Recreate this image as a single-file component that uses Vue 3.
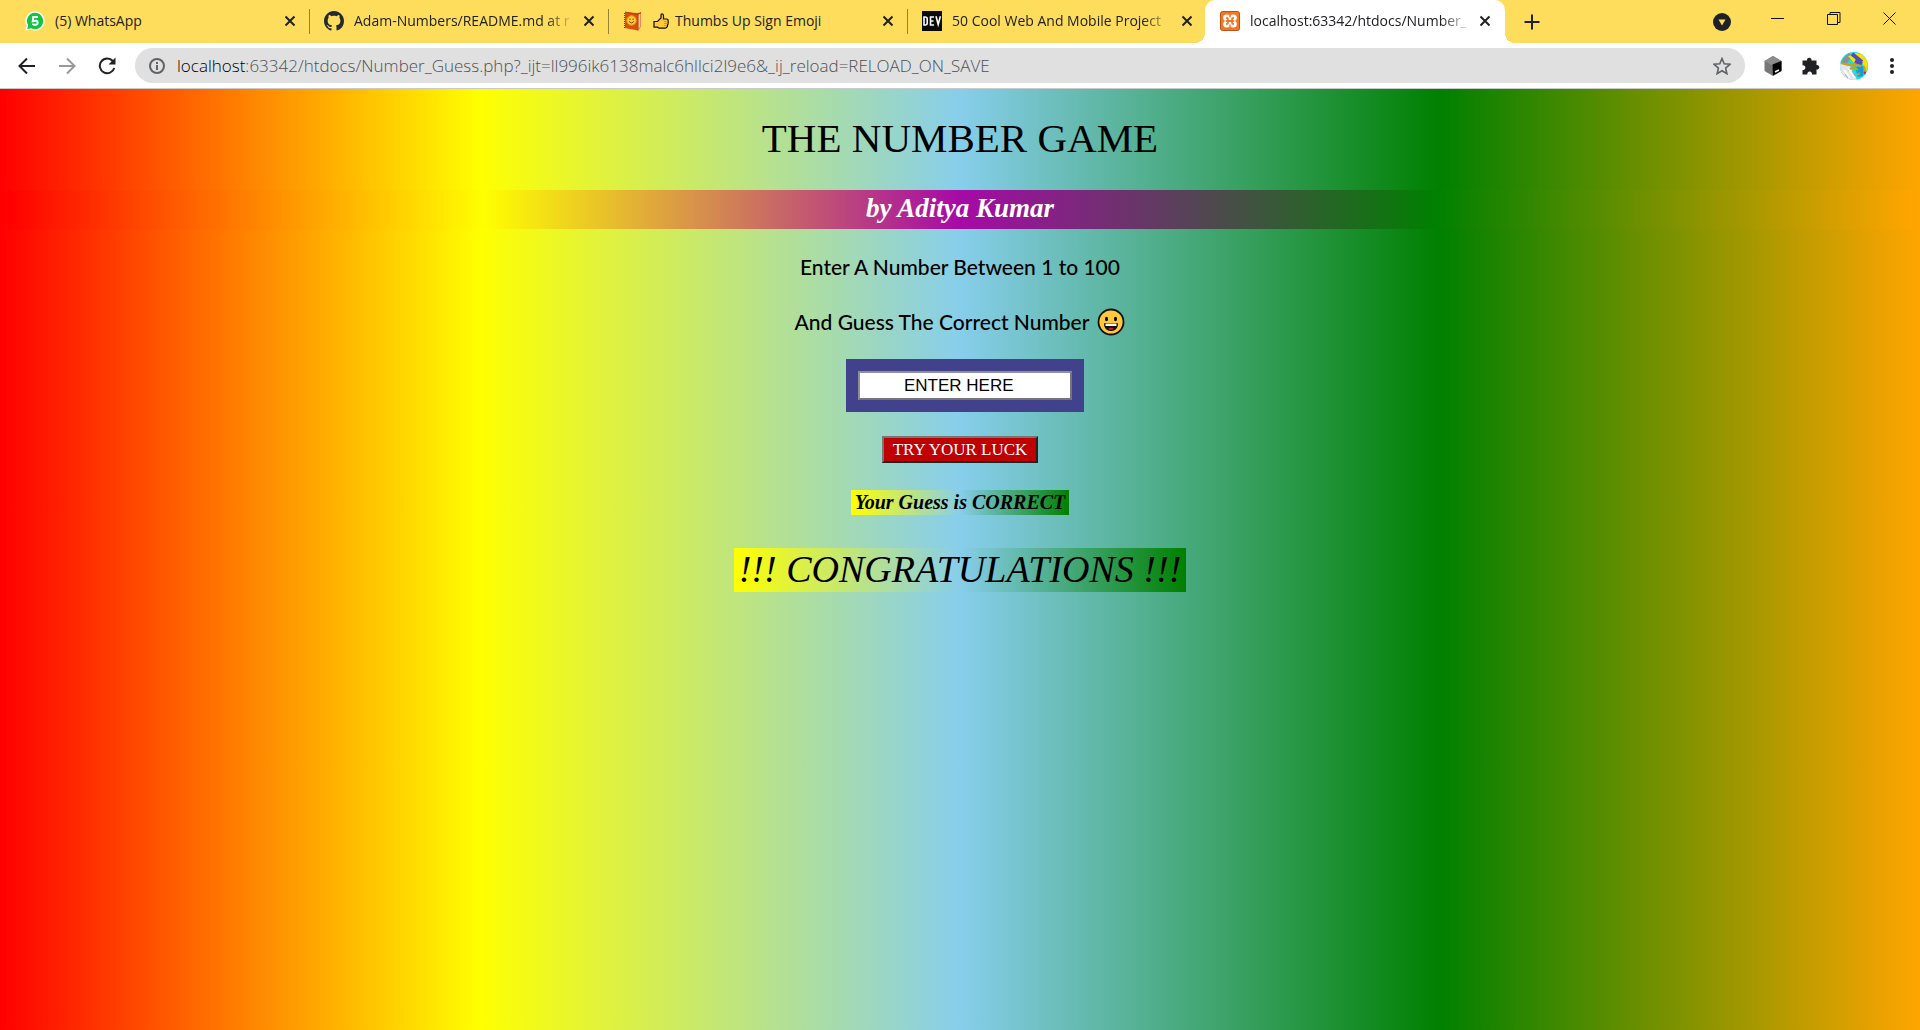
<script setup>
import { ref } from 'vue'

const tabs = [
  { icon: 'whatsapp', title: '(5) WhatsApp' },
  { icon: 'github', title: 'Adam-Numbers/README.md at r', fade: true },
  { icon: 'emoji', title: 'Thumbs Up Sign Emoji', thumb: true },
  { icon: 'dev', title: '50 Cool Web And Mobile Project', fade: true },
  { icon: 'xampp', title: 'localhost:63342/htdocs/Number_', fade: true, active: true },
]
const guess = ref('ENTER HERE')
</script>

<template>
  <div class="browser">
    <header>
      <nav class="tabstrip" aria-label="Tabs">
        <div v-for="t in tabs" :key="t.icon" class="tab" :class="[t.icon, { active: t.active }]">
          <svg v-if="t.icon === 'whatsapp'" class="fav" viewBox="0 0 20 20">
            <path d="M10 .4a9.6 9.6 0 1 1-4.300 18.200L.3 19.800l1.300-5A9.600 9.600 0 0 1 10 .4z" fill="#fff" />
            <path d="M10 1.800a8.200 8.200 0 1 1-3.800 15.500L2.200 18l1-3.700A8.200 8.200 0 0 1 10 1.800z" fill="#10c445" />
            <path d="M13 6H8.200L7.800 10.200c3-1 4.900-.5 4.900 1.500 0 2.200-3 2.600-5.300 1.300" fill="none" stroke="#fff" stroke-width="2" />
          </svg>
          <svg v-else-if="t.icon === 'github'" class="fav" viewBox="0 0 16 16">
            <path fill="#24292f" d="M8 0C3.580 0 0 3.580 0 8c0 3.540 2.290 6.530 5.470 7.590.4.070.55-.17.55-.38 0-.19-.01-.82-.01-1.490-2.010.37-2.530-.49-2.690-.94-.09-.23-.48-.94-.82-1.130-.28-.15-.68-.52-.01-.53.63-.01 1.080.58 1.230.82.72 1.210 1.870.87 2.330.66.07-.52.28-.87.51-1.070-1.780-.2-3.640-.89-3.640-3.950 0-.87.31-1.590.82-2.150-.08-.2-.36-1.020.08-2.120 0 0 .67-.21 2.200.82.64-.18 1.320-.27 2-.27s1.360.09 2 .27c1.530-1.040 2.200-.82 2.200-.82.44 1.100.16 1.920.08 2.120.51.56.82 1.270.82 2.150 0 3.070-1.870 3.750-3.650 3.950.29.25.54.73.54 1.480 0 1.070-.01 1.930-.01 2.200 0 .21.15.46.55.38A8.010 8.010 0 0 0 16 8c0-4.420-3.580-8-8-8z" />
          </svg>
          <svg v-else-if="t.icon === 'emoji'" class="fav" viewBox="0 0 20 20">
            <path d="M2 1l11.500 1 4.500-.5v14L15 19.500 2 17z" fill="#d9500b" />
            <path d="M15 3.500l2.500-1v13L15 18.500z" fill="#f0c9a0" />
            <path d="M2 1l13 2.500 3-2M15 19.500v-16" stroke="#b5420c" fill="none" />
            <path d="M1.500 2v15" stroke="#8a3510" stroke-dasharray="1 1" />
            <circle cx="8.500" cy="9.500" r="4.700" fill="#ffd12e" stroke="#f0961a" />
            <path d="M7 7.500v1.500M10 7.500v1.500M6 10.500q2.500 3 5 0" stroke="#8a4208" fill="none" />
          </svg>
          <svg v-else-if="t.icon === 'dev'" class="fav" viewBox="0 0 20 20">
            <rect width="20" height="20" fill="#0a0a0a" />
            <path d="M2 6v8h1.200Q5.200 14 5.200 12V8Q5.200 6 3.200 6zM12 6H8.500v8H12M8.500 10H11.500M14 5.200l2.200 8.300 2.200-8.300" fill="none" stroke="#fff" stroke-width="1.600" />
          </svg>
          <svg v-else class="fav" viewBox="0 0 20 20">
            <rect x=".5" y=".5" width="19" height="19" rx="2" fill="#f37623" stroke="#b9541a" />
            <g fill="none" stroke-linecap="round" stroke-linejoin="round">
              <path d="M6.500 6.800Q8 6.800 8 8.500v3q0 1.700-1.500 1.700M13.500 6.800Q12 6.800 12 8.500v3q0 1.700 1.500 1.700M8 10h4" stroke="#fff" stroke-width="6.600" />
              <path d="M6.800 7Q8 7 8 8.500q0 1.500-1.500 1.500M6.800 13Q8 13 8 11.500M13.200 7Q12 7 12 8.500q0 1.500 1.500 1.500M13.200 13Q12 13 12 11.500M8 10h4" stroke="#f37623" stroke-width="1.800" />
              <path d="M10 3v3M10 14v3" stroke="#f37623" stroke-width="1.400" />
            </g>
          </svg>
          <svg v-if="t.thumb" class="thumb" viewBox="0 0 16 16">
            <path d="M1 8.500h3.500L8 5V2q0-1.200 1-1.200 1.500 0 1.500 2V6H14q1.500.5 1 2 .5 1 0 2 .3 1.200-.5 2 .2 1.500-1 2.500-.5.700-1.500.7H6l-1.500-1H1z" fill="#ffc83d" stroke="#111" stroke-width="1.200" />
            <path d="M11 8.500h4M11 10.500h4M11 12.500h3" stroke="#c88a18" stroke-width=".7" />
          </svg>
          <span class="title" :class="{ fade: t.fade }">{{ t.title }}</span>
          <button class="close" aria-label="Close tab">
            <svg viewBox="0 0 12 12"><path d="M1.500 1.500l9 9M10.500 1.500l-9 9" /></svg>
          </button>
        </div>
        <button class="plus" aria-label="New tab">
          <svg viewBox="0 0 16 16"><path d="M8 .5v15M.5 8h15" /></svg>
        </button>
        <div class="window">
          <button aria-label="Search tabs">
            <svg width="18" height="18" viewBox="0 0 18 18"><circle cx="9" cy="9" r="9" fill="#202124" /><path d="M5.500 6.500h7L9 12.500z" fill="#ffdd5c" /></svg>
          </button>
          <button aria-label="Minimize"><svg class="line" width="14" height="14"><path d="M0 6.500h13" /></svg></button>
          <button aria-label="Restore"><svg class="line" width="14" height="14"><path d="M.5 2.500h10v10H.5zM3 2V.5h10v10H11" /></svg></button>
          <button aria-label="Close"><svg class="line" width="14" height="14"><path d="M.5.5l12 12M12.500.5l-12 12" /></svg></button>
        </div>
      </nav>
      <div class="toolbar">
        <button class="tool" aria-label="Back"><svg viewBox="0 0 18 18"><path d="M17 9H2M9 1.500L1.500 9 9 16.500" /></svg></button>
        <button class="tool off" aria-label="Forward"><svg viewBox="0 0 18 18"><path d="M1 9h15M9 1.500L16.500 9 9 16.500" /></svg></button>
        <button class="tool" aria-label="Reload"><svg viewBox="0 0 18 18"><path d="M14.800 4A7.400 7.400 0 1 0 16.300 11" /><path d="M17.500.5v7h-7z" class="solid" /></svg></button>
        <div class="address">
          <svg width="16" height="16" viewBox="0 0 16 16" fill="none" stroke="#5f6368" stroke-width="2"><circle cx="8" cy="8" r="7" /><path d="M8 7v5M8 4v2" /></svg>
          <span class="url"><b>localhost</b>:63342/htdocs/Number_Guess.php?_ijt=ll996ik6138malc6hllci2l9e6&amp;_ij_reload=RELOAD_ON_SAVE</span>
          <svg width="18" height="18" viewBox="0 0 18 18" fill="none" stroke="#5f6368" stroke-width="1.600"><path d="M9 1.500l2.200 5.300 5.800.5-4.400 3.800 1.300 5.600L9 13.700l-4.900 3 1.300-5.600L1 7.300l5.800-.5z" /></svg>
        </div>
        <div class="extensions">
          <svg width="18" height="20" viewBox="0 0 18 20"><path d="M9 0l8.500 5v10L9 20 .5 15V5z" fill="#777" /><path d="M9 0l8.500 5L9 10 .5 5z" fill="#8c8c8c" /><path d="M8.500 8.500l9-3.500v10L9 19.500z" fill="#000" /><path d="M11 16l4-2" stroke="#fff" stroke-width="1.500" /></svg>
          <svg width="20" height="18" viewBox="0 0 20 18"><path d="M2 3.500h4a2.300 2.300 0 1 1 4.500 0h5V8a2.300 2.300 0 1 1 0 4.500v5H11a2.400 2.400 0 1 0-4.700 0H1.500V13a2.400 2.400 0 1 0 0-4.700V3.500z" fill="#202124" /></svg>
          <svg width="28" height="28" viewBox="0 0 28 28">
            <defs><clipPath id="avatar"><circle cx="14" cy="14" r="14" /></clipPath></defs>
            <g clip-path="url(#avatar)">
              <rect width="28" height="28" fill="#18dfe5" />
              <path d="M0 11l10 3 7 14H3L0 22z" fill="#e4e4ec" />
              <path d="M3 7l6-6 3 4-5 6-6 1z" fill="#8d8e98" />
              <path d="M14 1l8 1 6 8-1 9-5-8z" fill="#f3e400" />
              <path d="M8 4l6 7 5-2-6-6z" fill="#f3e400" />
              <path d="M12 2l10 8M15 9l7 3" stroke="#554bbd" stroke-width="4" />
              <path d="M15 15l9-1-1 10-5 1z" fill="#169ad9" />
              <path d="M1 11l7 2 6-1 7 2M8 18l6-3 4 3M24 14l1 6M17 23l3-2" stroke="#c8a416" stroke-width="2" fill="none" />
              <path d="M4 18l6 8M8 16l7 10" stroke="#fff" stroke-width="2" />
              <path d="M5 22l3 4M12 19l3 5" stroke="#a5a6b4" />
              <path d="M24 20l2 2" stroke="#db1842" stroke-width="2" />
            </g>
          </svg>
          <svg class="dots" width="4" height="18" viewBox="0 0 4 18" fill="#202124"><circle cx="2" cy="3" r="2" /><circle cx="2" cy="9" r="2" /><circle cx="2" cy="15" r="2" /></svg>
        </div>
      </div>
    </header>
    <main>
      <h1>THE NUMBER GAME</h1>
      <h2>by Aditya Kumar</h2>
      <p><label for="guess">Enter A Number Between 1 to 100</label></p>
      <p class="second">And Guess The Correct Number
        <svg class="smile" viewBox="0 0 28 28">
          <circle cx="14" cy="14" r="12.500" fill="#ffc83d" stroke="#111" stroke-width="1.800" />
          <ellipse cx="9.500" cy="11" rx="1.500" ry="2.200" /><ellipse cx="18.500" cy="11" rx="1.500" ry="2.200" />
          <path d="M7.500 15.500h13q0 7-6.500 7t-6.500-7z" fill="#111" stroke="#111" />
          <path d="M8.500 15.500h11v2.500h-11z" fill="#fff" /><path d="M11 21q3-2.500 6 0-3 1.500-6 0z" fill="#e81224" />
        </svg>
      </p>
      <form @submit.prevent>
        <div class="frame"><input id="guess" v-model="guess" type="text" /></div>
        <button class="luck" type="submit">TRY YOUR LUCK</button>
      </form>
      <div class="result">Your Guess is CORRECT</div>
      <div class="result big">!!! CONGRATULATIONS !!!</div>
    </main>
  </div>
</template>

<style>
body { margin: 0; }
</style>

<style scoped>
* { box-sizing: border-box; }
.browser { display: flex; flex-direction: column; min-height: 100vh; font-family: "Open Sans", "Noto Sans", sans-serif; color: #000; }
button { font: inherit; border: 0; padding: 0; background: none; }
svg { display: block; flex: none; }
header { background: #fff; border-bottom: 1px solid #c8cacc; }
.tabstrip { display: flex; height: 43px; background: #ffdd5c; }
.tab { position: relative; display: flex; align-items: center; flex: 0 1 299px; min-width: 0; padding: 0 14px 2px; font-size: 14px; color: #202124; }
.tab.whatsapp { flex-basis: 310px; padding-left: 25px; }
.tab:not(.active):not(.dev)::after { content: ""; position: absolute; right: 0; top: 9px; height: 25px; width: 1px; background: #947f3b; }
.tab.dev { flex-basis: 297px; padding-right: 12px; }
.tab.active { flex-basis: 300px; padding-left: 15px; background: #fff; border-radius: 10px 10px 0 0; }
.tab.active::before, .tab.active::after { content: ""; position: absolute; bottom: 0; width: 10px; height: 10px; }
.tab.active::before { left: -10px; background: radial-gradient(circle at 0 0, transparent 10px, #fff 10px); }
.tab.active::after { right: -10px; background: radial-gradient(circle at 100% 0, transparent 10px, #fff 10px); }
.fav { width: 20px; height: 20px; margin-right: 10px; }
.thumb { width: 16px; height: 16px; margin-right: 6px; }
.title { flex: 1; min-width: 0; white-space: nowrap; }
.title.fade { -webkit-mask-image: linear-gradient(90deg, #000 calc(100% - 30px), transparent); mask-image: linear-gradient(90deg, #000 calc(100% - 30px), transparent); }
.close { margin-left: 8px; }
.close svg { width: 12px; height: 12px; stroke: #202124; stroke-width: 2; }
.plus { width: 54px; }
.plus svg { width: 16px; height: 16px; margin: 0 auto; stroke: #202124; stroke-width: 2; }
.window { display: flex; align-items: center; margin-left: auto; padding-right: 2px; }
.window button { display: flex; justify-content: center; width: 56px; }
.line { fill: none; stroke: #111; margin-bottom: 5px; }
.toolbar { display: flex; align-items: center; height: 45px; padding: 0 26px 0 18px; }
.tool { margin-right: 22px; }
.tool:nth-child(3) { margin-right: 19px; }
.tool svg { width: 18px; height: 18px; fill: none; stroke: #202124; stroke-width: 2; }
.tool.off svg { stroke: #999; }
.tool .solid { fill: #202124; stroke: none; }
.address { display: flex; align-items: center; flex: 1; height: 35px; min-width: 0; border-radius: 18px; background: #e0e0e0; padding: 0 14px; }
.url { flex: 1; min-width: 0; overflow: hidden; white-space: nowrap; margin-left: 12px; font-size: 17px; font-weight: 300; color: #4c5055; }
.url b { font-weight: 300; color: #000; }
.extensions { display: flex; align-items: center; gap: 19px; margin-left: 19px; }
.dots { margin-left: 3px; }
main { flex: 1; display: flex; flex-direction: column; align-items: center; padding: 0 8px; background: linear-gradient(90deg, red, yellow, skyblue, green, orange); }
h1 { margin: 24px 0 27px; font: 400 41px/50px "Liberation Serif", serif; }
h2 { align-self: stretch; margin: 0 0 24px; height: 39px; text-align: center; color: #fff; font: italic 700 27px/36px "Liberation Serif", serif; background: linear-gradient(90deg, red, yellow, #a60aa6, green, orange); }
p { margin: 0 0 27px; font: 500 21px/28px Lato, sans-serif; }
.second { display: flex; align-items: center; gap: 8px; margin-bottom: 23px; }
.smile { width: 28px; height: 28px; }
form { display: flex; flex-direction: column; align-items: center; }
.frame { padding: 12px; margin-left: 10px; background: #41418c; }
.frame input { display: block; width: 214px; height: 29px; padding: 0 0 0 44px; border: 2px solid; border-color: #8b9296 #767676 #767676 #8b9296; background: #fff; color: #000; font: 17px "Liberation Sans", sans-serif; }
.luck { width: 156px; height: 27px; margin: 24px 0 27px; border: 2px solid; border-color: #767676 #222 #222 #767676; background: #c00000; color: #fff; font: 17px "Liberation Serif", serif; }
.result { margin-bottom: 33px; width: 218px; height: 25px; text-align: center; white-space: nowrap; font: italic 700 20px/25px "Liberation Serif", serif; background: linear-gradient(90deg, yellow, skyblue, green); }
.result.big { width: 452px; height: 44px; font-size: 38px; line-height: 42px; font-weight: 400; }
</style>
